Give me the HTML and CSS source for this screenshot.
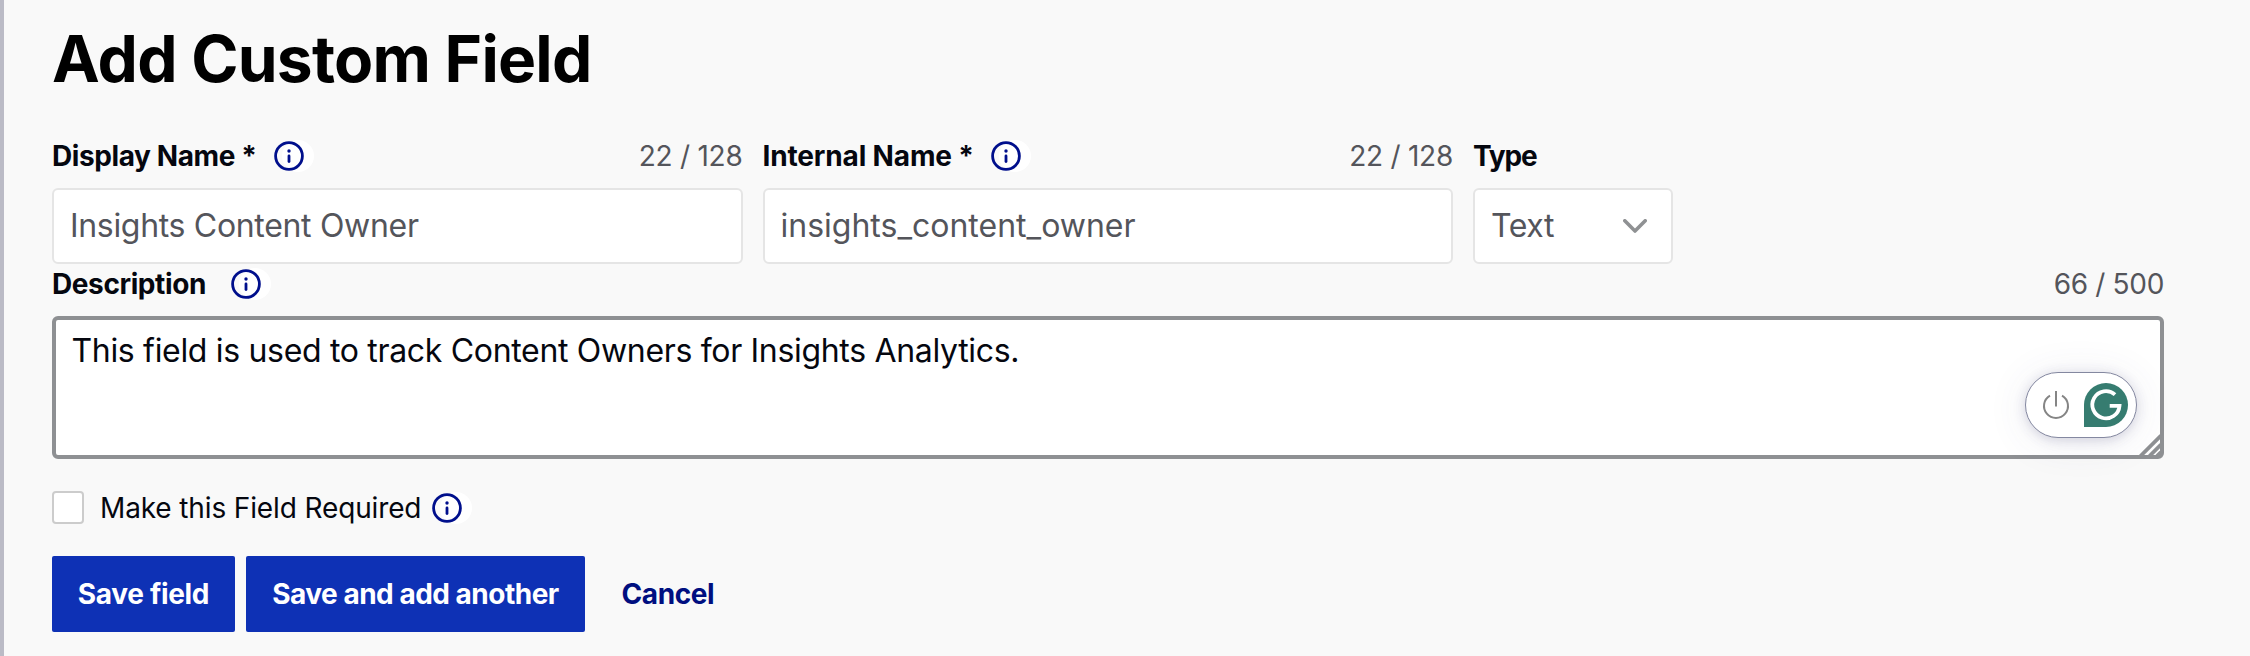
FILE: index.html
```html
<!DOCTYPE html>
<html lang="en">
<head>
<meta charset="utf-8">
<title>Add Custom Field</title>
<link rel="stylesheet" href="styles.css">
</head>
<body>
<svg class="defs" width="0" height="0">
  <symbol id="info" viewBox="0 0 40 32">
    <circle cx="24" cy="16" r="16" fill="#fff"/>
    <circle cx="15" cy="16" r="13.4" fill="none" stroke="#000f8c" stroke-width="2.8"/>
    <circle cx="15" cy="11" r="1.7" fill="#000f8c"/>
    <path d="M15 16v5.6" stroke="#000f8c" stroke-width="2.8" stroke-linecap="round"/>
  </symbol>
</svg>
<main class="panel">
  <h1 class="title">Add Custom Field</h1>
  <div class="fields">
    <div class="field">
      <div class="head">
        <span class="label label-display">Display Name *</span>
        <svg class="info"><use href="#info"/></svg>
        <span class="count">22 / 128</span>
      </div>
      <div class="input"><span class="value-display">Insights Content Owner</span></div>
    </div>
    <div class="field">
      <div class="head">
        <span class="label label-internal">Internal Name *</span>
        <svg class="info"><use href="#info"/></svg>
        <span class="count">22 / 128</span>
      </div>
      <div class="input"><span class="value-internal">insights_content_owner</span></div>
    </div>
    <div class="field">
      <div class="head"><span class="label label-type">Type</span></div>
      <div class="input select">
        <span class="value-type">Text</span>
        <svg class="chevron" viewBox="0 0 24 14"><path d="M1.8 1.8L12 12L22.2 1.8" fill="none" stroke="#8f9193" stroke-width="3.6" stroke-linecap="round" stroke-linejoin="round"/></svg>
      </div>
    </div>
  </div>
  <div class="description">
    <div class="head">
      <span class="label label-description">Description</span>
      <svg class="info"><use href="#info"/></svg>
      <span class="count count-description">66 / 500</span>
    </div>
    <div class="textarea">This field is used to track Content Owners for Insights Analytics.
      <svg class="grip" viewBox="0 0 24 24"><path d="M2.5 23L23 2.5M11.5 23L23 11.5M19 23L23 19" stroke="#8e9093" stroke-width="3.8" fill="none"/></svg>
      <div class="assistant">
        <svg class="power" viewBox="0 0 28 30"><path d="M8 5.6A12 12 0 1 0 20 5.6M14 1V16.5" fill="none" stroke="#858585" stroke-width="2"/></svg>
        <svg class="badge" viewBox="0 0 44 44"><path d="M0 44V22A22 22 0 1 1 22 44Z" fill="#367c70"/><path d="M31 11.6A13.6 13.6 0 1 0 35.5 22.8H25.7" fill="none" stroke="#fff" stroke-width="3.8"/></svg>
      </div>
    </div>
  </div>
  <div class="required">
    <span class="checkbox"></span>
    <span class="required-label">Make this Field Required</span>
    <svg class="info"><use href="#info"/></svg>
  </div>
  <div class="actions">
    <button class="button save">Save field</button>
    <button class="button save-another">Save and add another</button>
    <a class="cancel">Cancel</a>
  </div>
</main>
</body>
</html>
```
FILE: styles.css
```css
* { box-sizing: border-box; }
body { margin: 0; background: #f9f9f9; font-family: "Inter", "Liberation Sans", sans-serif; color: #05070f; }
.defs { position: absolute; }
.panel { height: 656px; border-left: 4px solid #bbbbc6; padding: 19px 86px 0 48px; overflow: hidden; }
.title { margin: 0 0 41px; font-size: 64px; line-height: 80px; font-weight: 700; letter-spacing: -0.75px; color: #000; }
.fields { display: grid; grid-template-columns: 690.5px 690.5px 200px; column-gap: 20px; }
.head { display: flex; align-items: center; height: 32px; margin-bottom: 16px; font-size: 28px; line-height: 32px; white-space: nowrap; }
.label { font-weight: 700; margin-right: 17px; }
.label-display { letter-spacing: -0.4px; }
.label-internal { letter-spacing: -0.15px; }
.label-type { letter-spacing: -1.15px; }
.label-description { letter-spacing: -0.4px; margin-right: 25px; }
.info { width: 40px; height: 32px; flex: none; }
.count { margin-left: auto; color: #54555b; letter-spacing: -0.25px; }
.count-description { letter-spacing: -0.32px; }
.input { display: flex; align-items: center; height: 76px; padding: 0 16px; border: 2px solid #e5e5e5; border-radius: 6px; background: #fff; color: #54555b; font-size: 32px; line-height: 40px; }
.value-display { letter-spacing: -0.32px; }
.value-internal { letter-spacing: 0; }
.value-type { letter-spacing: -0.4px; }
.select { justify-content: space-between; padding-right: 24px; }
.chevron { width: 24px; height: 14px; }
.description { margin-top: 4px; }
.textarea { position: relative; width: 2112px; height: 143px; padding: 11px 16px 11px 15.5px; border: 4px solid #8e9093; border-radius: 6px; background: #fff; font-size: 32px; line-height: 40px; letter-spacing: -0.32px; }
.assistant { position: absolute; right: 23px; bottom: 17px; display: flex; align-items: center; justify-content: space-between; width: 112px; height: 66px; padding: 0 8px 0 16px; border: 1px solid #8488a0; border-radius: 33px; background: #fff; box-shadow: 0 2px 12px rgba(70, 70, 120, .2), 0 4px 40px rgba(70, 70, 120, .1); }
.power { width: 28px; height: 30px; }
.badge { width: 44px; height: 44px; }
.grip { position: absolute; right: -2px; bottom: -2px; width: 24px; height: 24px; }
.required { display: flex; align-items: center; height: 33px; margin-top: 32px; font-size: 28px; line-height: 32px; }
.checkbox { width: 32px; height: 33px; margin-right: 16px; border: 2px solid #ccc; border-radius: 4px; background: #fff; }
.required-label { letter-spacing: -0.13px; margin-right: 11px; }
.actions { display: flex; align-items: center; margin-top: 32px; font-size: 28px; }
.button { height: 76px; padding: 0; border: 0; border-radius: 2px; background: #0e31b5; color: #fff; font: 700 28px/32px "Inter", "Liberation Sans", sans-serif; }
.save { width: 183px; margin-right: 11px; letter-spacing: -0.32px; }
.save-another { width: 339px; letter-spacing: -0.5px; }
.cancel { margin-left: 36.5px; color: #000f80; font-weight: 700; letter-spacing: -0.4px; }
```
